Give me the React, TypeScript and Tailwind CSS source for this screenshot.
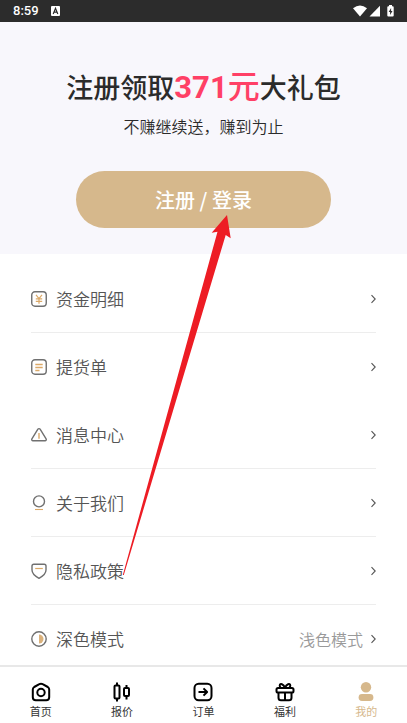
import type { ReactNode } from "react";

type MenuItem = {
  label: string;
  icon: ReactNode;
  value?: string;
  divider?: boolean;
};

const menuItems: MenuItem[] = [
  {
    label: "资金明细",
    divider: true,
    icon: (
      <>
        <rect x="0.75" y="0.75" width="14.5" height="14.5" rx="3.2" />
        <path
          d="M5 3.8l3 3.8 3-3.8M4.8 7.9h6.4M4.8 10.4h6.4M8 7.6v5.2"
          stroke="#dba968"
          strokeWidth="1.2"
        />
      </>
    ),
  },
  {
    label: "提货单",
    icon: (
      <>
        <rect x="0.75" y="0.75" width="14.5" height="14.5" rx="3.2" />
        <path
          d="M4.3 5.5h7.4M4.3 8.5h7.4M4.3 11.5h4.2"
          stroke="#dba968"
          strokeWidth="1.3"
        />
      </>
    ),
  },
  {
    label: "消息中心",
    divider: true,
    icon: (
      <>
        <path d="M6.9 2.2a1.3 1.3 0 0 1 2.2 0l6 9.6a1.3 1.3 0 0 1-1.1 2H2a1.3 1.3 0 0 1-1.1-2z" />
        <path d="M8 6v5.8" stroke="#dba968" strokeWidth="1.4" />
      </>
    ),
  },
  {
    label: "关于我们",
    divider: true,
    icon: (
      <>
        <circle cx="8" cy="6.4" r="5.5" />
        <path d="M4 14.5h8" stroke="#dba968" strokeWidth="1.1" />
      </>
    ),
  },
  {
    label: "隐私政策",
    divider: true,
    icon: (
      <>
        <path d="M1 3.1Q1 1.3 2.8 1.3h10.4Q15 1.3 15 3.1V7c0 3.7-3.3 6.3-7 8.3C4.3 13.3 1 10.7 1 7z" />
        <path d="M4.2 5.5h7.6" stroke="#dba968" strokeWidth="1.2" />
      </>
    ),
  },
  {
    label: "深色模式",
    value: "浅色模式",
    icon: (
      <>
        <circle cx="8" cy="8" r="7.2" />
        <path d="M8 3.5a4.5 4.5 0 0 1 0 9z" fill="#dbb27c" stroke="none" />
      </>
    ),
  },
];

type Tab = { label: string; icon: ReactNode; active?: boolean };

const tabs: Tab[] = [
  {
    label: "首页",
    icon: (
      <>
        <path d="M8.3 2.2Q10 1.2 11.7 2.2L16.8 5Q18.2 5.9 18.2 7.5v7.7a3 3 0 0 1-3 3H4.8a3 3 0 0 1-3-3V7.5Q1.8 5.9 3.2 5z" />
        <circle cx="10" cy="10.5" r="3.7" />
      </>
    ),
  },
  {
    label: "报价",
    icon: (
      <>
        <rect x="2.5" y="3.5" width="5" height="13" rx="1" />
        <path d="M5 .5v3M5 16.5v3M14.5 3v3M14.5 14v3.5" />
        <rect x="12" y="6" width="5" height="8" rx="1" />
      </>
    ),
  },
  {
    label: "订单",
    icon: (
      <>
        <rect x="1.5" y="1.7" width="17" height="16.6" rx="4.2" />
        <path d="M5.5 10h8.5M10.5 6.4l3.6 3.6-3.6 3.6" />
      </>
    ),
  },
  {
    label: "福利",
    icon: (
      <>
        <rect x="1.5" y="6" width="17" height="4.5" rx="1.6" />
        <path d="M3.5 10.5v5.2a2.5 2.5 0 0 0 2.5 2.5h8a2.5 2.5 0 0 0 2.5-2.5v-5.2M10 10.5v7.5" />
        <path d="M10 5.8C8.5 2 5 .8 4.7 3.5c0 1.2.5 2 1.3 2.5M10 5.8C11.5 2 15 .8 15.3 3.5c0 1.2-.5 2-1.3 2.5" />
      </>
    ),
  },
  {
    label: "我的",
    active: true,
    icon: (
      <g fill="currentColor" stroke="none">
        <circle cx="10" cy="5.3" r="5.2" />
        <rect x="2.6" y="12" width="14.8" height="7" rx="3.4" />
      </g>
    ),
  },
];

function StatusBar() {
  return (
    <div className="flex h-[22px] shrink-0 items-center justify-between bg-[#2c2c2c] px-[13px] text-white">
      <div className="flex items-center gap-3">
        <span className="font-['Roboto',sans-serif] text-[13px] font-medium">
          8:59
        </span>
        <svg viewBox="0 0 9 10" className="h-[10px] w-[9px]">
          <rect width="9" height="10" rx="1" fill="white" />
          <path
            d="M2.2 8L4.5 2.3 6.8 8M3 6.2h3"
            fill="none"
            stroke="#2c2c2c"
            strokeWidth="1.2"
          />
        </svg>
      </div>
      <svg viewBox="0 0 42 12" className="h-3 w-[42px]" fill="white">
        <path d="M1 3.2Q8-2.2 15 3.2L8 11.5z" />
        <path d="M28 .8v10.700H17.500z" />
        <path d="M37 1.2V0h3v1.2h.7a1 1 0 0 1 1 1v8.3a1 1 0 0 1-1 1h-4.4a1 1 0 0 1-1-1V2.2a1 1 0 0 1 1-1z" />
        <path d="M39.1 3l-2.4 4h1.4v3l2.4-4h-1.4z" fill="#2c2c2c" />
      </svg>
    </div>
  );
}

function Hero() {
  return (
    <section className="flex flex-col items-center bg-[#f8f7fc] pt-11 pb-[26px]">
      <h1 className="text-[27px] leading-[42px] font-medium text-[#2b2b2b]">
        注册领取
        <span className="text-[32px] leading-none text-[#ff4066]">
          <span className="font-['Roboto',sans-serif] text-[31px] font-bold">
            371
          </span>
          元
        </span>
        大礼包
      </h1>
      <p className="mt-1 text-base leading-7 font-[350] text-[#2b2b2b]">
        不赚继续送，赚到为止
      </p>
      <div className="mt-[31px] w-full px-[76px]">
        <button
          type="button"
          className="h-[57px] w-full rounded-full bg-[#d6b88c] text-xl font-medium text-white"
        >
          注册 / 登录
        </button>
      </div>
    </section>
  );
}

function MenuRow({ label, icon, value, divider }: MenuItem) {
  return (
    <li
      className={
        divider
          ? "h-[68px] border-b border-[#ededed]"
          : "h-[68px] border-b border-transparent"
      }
    >
      <button type="button" className="flex h-full w-full items-center">
        <svg
          viewBox="0 0 16 16"
          className="size-4 overflow-visible"
          fill="none"
          stroke="#707070"
          strokeWidth="1.4"
        >
          {icon}
        </svg>
        <span className="ml-[9px] text-[17px] font-[350] text-[#555]">
          {label}
        </span>
        <span className="ml-auto text-base font-[350] text-[#999]">
          {value}
        </span>
        <svg
          viewBox="0 0 5 8"
          className="ml-2 h-2 w-[5px] overflow-visible"
          fill="none"
          stroke="#555"
          strokeWidth="1.1"
        >
          <path d="M.5.2L4.2 4 .5 7.8" />
        </svg>
      </button>
    </li>
  );
}

function TabBar() {
  return (
    <nav className="grid shrink-0 grid-cols-5 border-t-2 border-[#e8e8e8] bg-white pt-[15px] pb-1">
      {tabs.map(({ label, icon, active }) => (
        <a
          key={label}
          href="#"
          className={
            active
              ? "flex flex-col items-center text-[#d6b88c]"
              : "flex flex-col items-center text-black"
          }
        >
          <svg
            viewBox="0 0 20 20"
            className="size-5"
            fill="none"
            stroke="currentColor"
            strokeWidth="2"
            strokeLinejoin="round"
          >
            {icon}
          </svg>
          <span
            className={
              active
                ? "mt-px text-[11px] leading-4"
                : "mt-px text-[11px] leading-4 text-[#333]"
            }
          >
            {label}
          </span>
        </a>
      ))}
    </nav>
  );
}

export default function App() {
  return (
    <div className="relative flex h-screen flex-col overflow-hidden bg-white font-['Noto_Sans_CJK_SC',sans-serif]">
      <StatusBar />
      <main className="min-h-0 flex-1 overflow-y-auto [scrollbar-width:none]">
        <Hero />
        <ul className="px-[31px] pt-[11px]">
          {menuItems.map((item) => (
            <MenuRow key={item.label} {...item} />
          ))}
        </ul>
      </main>
      <TabBar />
      {/* pointer to the login button */}
      <svg
        viewBox="0 0 110 362"
        className="pointer-events-none absolute top-[214px] left-[122px] h-[362px] w-[110px]"
        fill="#ed1c24"
      >
        <path d="M105 1L89.7 18.7l5.8-1L.8 361h1L103.7 21l5 3.3z" />
      </svg>
    </div>
  );
}
